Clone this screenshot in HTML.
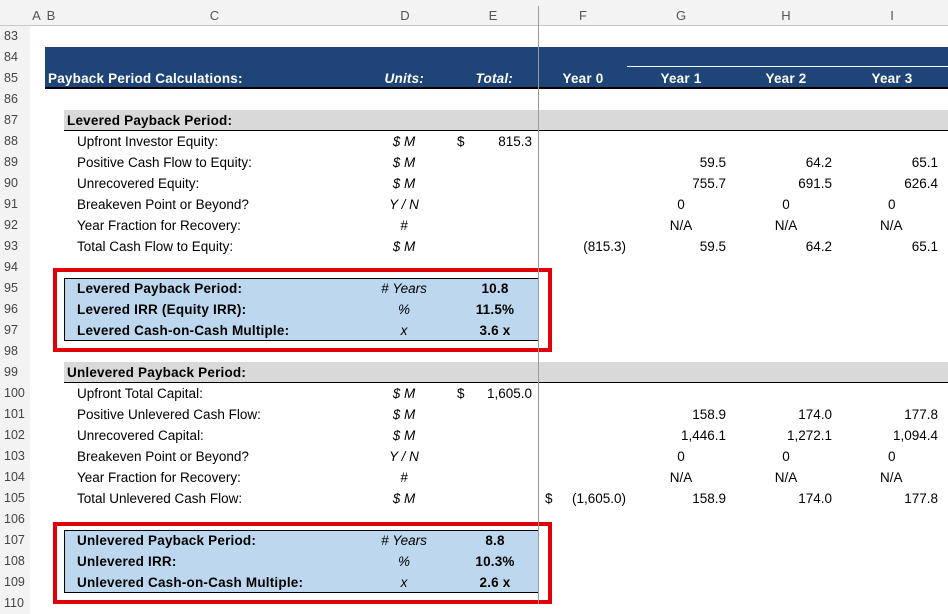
<!DOCTYPE html>
<html><head><meta charset="utf-8"><style>
*{margin:0;padding:0;box-sizing:border-box}
body{width:948px;height:604px;overflow:hidden;background:#fff;font-family:"Liberation Sans",Arial,sans-serif;font-size:13.5px;color:#000;position:relative}
div{position:absolute;white-space:nowrap}
.t{height:21px;line-height:21px}
.r{text-align:right}
.c{text-align:center}
.b{font-weight:bold;letter-spacing:0.2px}
.i{font-style:italic}
.rn{left:0;width:30px;padding-left:4px;color:#444;font-size:12.5px;background:#f3f3f3;height:21px;line-height:21px}
.hd{top:0;height:26px;line-height:32px;font-size:13px;color:#555;text-align:center}
</style></head><body>
<div style="left:0;top:0;width:948px;height:26px;background:#f3f3f3;border-bottom:1px solid #c8c8c8"></div>
<div style="left:0;top:26px;width:30px;height:578px;background:#f3f3f3;border-right:1px solid #d0d0d0"></div>
<div class="hd" style="left:30px;width:13px">A</div>
<div class="hd" style="left:43px;width:16px">B</div>
<div class="hd" style="left:59px;width:311px">C</div>
<div class="hd" style="left:370px;width:70px">D</div>
<div class="hd" style="left:448px;width:90px">E</div>
<div class="hd" style="left:538px;width:90px">F</div>
<div class="hd" style="left:630px;width:102px">G</div>
<div class="hd" style="left:735px;width:102px">H</div>
<div class="hd" style="left:840px;width:104px">I</div>

<div style="left:45px;top:47px;width:903px;height:42px;background:#1f4478;border-bottom:2px solid #000"></div>
<div style="left:627px;top:66px;width:321px;height:1px;background:#fff"></div>
<div class="t b" style="left:48px;top:68px;color:#fff">Payback Period Calculations:</div>
<div class="t b i" style="left:370px;top:68px;width:54px;text-align:right;color:#fff">Units:</div>
<div class="t b i" style="left:440px;top:68px;width:73px;text-align:right;color:#fff">Total:</div>
<div class="t b c" style="left:538px;top:68px;width:90px;color:#fff">Year 0</div>
<div class="t b c" style="left:630px;top:68px;width:102px;color:#fff">Year 1</div>
<div class="t b c" style="left:735px;top:68px;width:102px;color:#fff">Year 2</div>
<div class="t b c" style="left:840px;top:68px;width:104px;color:#fff">Year 3</div>

<div style="left:64px;top:110px;width:884px;height:21px;background:#d9d9d9;border-bottom:1px solid #000"></div>
<div class="t b" style="left:67px;top:110px">Levered Payback Period:</div>
<div style="left:64px;top:362px;width:884px;height:21px;background:#d9d9d9;border-bottom:1px solid #000"></div>
<div class="t b" style="left:67px;top:362px">Unlevered Payback Period:</div>

<div class="t" style="left:77px;top:131px">Upfront Investor Equity:</div>
<div class="t" style="left:77px;top:152px">Positive Cash Flow to Equity:</div>
<div class="t" style="left:77px;top:173px">Unrecovered Equity:</div>
<div class="t" style="left:77px;top:194px">Breakeven Point or Beyond?</div>
<div class="t" style="left:77px;top:215px">Year Fraction for Recovery:</div>
<div class="t" style="left:77px;top:236px">Total Cash Flow to Equity:</div>
<div class="t i c" style="left:370px;top:131px;width:68px">$ M</div>
<div class="t i c" style="left:370px;top:152px;width:68px">$ M</div>
<div class="t i c" style="left:370px;top:173px;width:68px">$ M</div>
<div class="t i c" style="left:370px;top:194px;width:68px">Y / N</div>
<div class="t i c" style="left:370px;top:215px;width:68px">#</div>
<div class="t i c" style="left:370px;top:236px;width:68px">$ M</div>
<div class="t" style="left:457px;top:131px">$</div>
<div class="t r" style="left:460px;top:131px;width:72px">815.3</div>
<div class="t r" style="left:538px;top:236px;width:88px">(815.3)</div>
<div class="t r" style="left:630px;top:152px;width:96px">59.5</div>
<div class="t r" style="left:630px;top:173px;width:96px">755.7</div>
<div class="t c" style="left:630px;top:194px;width:102px">0</div>
<div class="t c" style="left:630px;top:215px;width:102px">N/A</div>
<div class="t r" style="left:630px;top:236px;width:96px">59.5</div>
<div class="t r" style="left:735px;top:152px;width:97px">64.2</div>
<div class="t r" style="left:735px;top:173px;width:97px">691.5</div>
<div class="t c" style="left:735px;top:194px;width:102px">0</div>
<div class="t c" style="left:735px;top:215px;width:102px">N/A</div>
<div class="t r" style="left:735px;top:236px;width:97px">64.2</div>
<div class="t r" style="left:840px;top:152px;width:98px">65.1</div>
<div class="t r" style="left:840px;top:173px;width:98px">626.4</div>
<div class="t" style="left:888px;top:194px">0</div>
<div class="t" style="left:880px;top:215px">N/A</div>
<div class="t r" style="left:840px;top:236px;width:98px">65.1</div>

<div style="left:53px;top:268px;width:499px;height:84px;border:4px solid #e0000a"></div>
<div style="left:64px;top:278px;width:474px;height:63px;background:#bdd7ee;border:1px solid #000;border-right:none"></div>
<div class="t b" style="left:77px;top:278px">Levered Payback Period:</div>
<div class="t b" style="left:77px;top:299px">Levered IRR (Equity IRR):</div>
<div class="t b" style="left:77px;top:320px">Levered Cash-on-Cash Multiple:</div>
<div class="t i c" style="left:370px;top:278px;width:68px">#&nbsp;Years</div>
<div class="t i c" style="left:370px;top:299px;width:68px">%</div>
<div class="t i c" style="left:370px;top:320px;width:68px">x</div>
<div class="t b c" style="left:455px;top:278px;width:80px">10.8</div>
<div class="t b c" style="left:455px;top:299px;width:80px">11.5%</div>
<div class="t b c" style="left:455px;top:320px;width:80px">3.6 x</div>

<div class="t" style="left:77px;top:383px">Upfront Total Capital:</div>
<div class="t" style="left:77px;top:404px">Positive Unlevered Cash Flow:</div>
<div class="t" style="left:77px;top:425px">Unrecovered Capital:</div>
<div class="t" style="left:77px;top:446px">Breakeven Point or Beyond?</div>
<div class="t" style="left:77px;top:467px">Year Fraction for Recovery:</div>
<div class="t" style="left:77px;top:488px">Total Unlevered Cash Flow:</div>
<div class="t i c" style="left:370px;top:383px;width:68px">$ M</div>
<div class="t i c" style="left:370px;top:404px;width:68px">$ M</div>
<div class="t i c" style="left:370px;top:425px;width:68px">$ M</div>
<div class="t i c" style="left:370px;top:446px;width:68px">Y / N</div>
<div class="t i c" style="left:370px;top:467px;width:68px">#</div>
<div class="t i c" style="left:370px;top:488px;width:68px">$ M</div>
<div class="t" style="left:457px;top:383px">$</div>
<div class="t r" style="left:460px;top:383px;width:72px">1,605.0</div>
<div class="t" style="left:545px;top:488px">$</div>
<div class="t r" style="left:538px;top:488px;width:88px">(1,605.0)</div>
<div class="t r" style="left:630px;top:404px;width:96px">158.9</div>
<div class="t r" style="left:630px;top:425px;width:96px">1,446.1</div>
<div class="t c" style="left:630px;top:446px;width:102px">0</div>
<div class="t c" style="left:630px;top:467px;width:102px">N/A</div>
<div class="t r" style="left:630px;top:488px;width:96px">158.9</div>
<div class="t r" style="left:735px;top:404px;width:97px">174.0</div>
<div class="t r" style="left:735px;top:425px;width:97px">1,272.1</div>
<div class="t c" style="left:735px;top:446px;width:102px">0</div>
<div class="t c" style="left:735px;top:467px;width:102px">N/A</div>
<div class="t r" style="left:735px;top:488px;width:97px">174.0</div>
<div class="t r" style="left:840px;top:404px;width:98px">177.8</div>
<div class="t r" style="left:840px;top:425px;width:98px">1,094.4</div>
<div class="t" style="left:888px;top:446px">0</div>
<div class="t" style="left:880px;top:467px">N/A</div>
<div class="t r" style="left:840px;top:488px;width:98px">177.8</div>

<div style="left:53px;top:522px;width:499px;height:82px;border:4px solid #e0000a"></div>
<div style="left:64px;top:530px;width:474px;height:63px;background:#bdd7ee;border:1px solid #000;border-right:none"></div>
<div class="t b" style="left:77px;top:530px">Unlevered Payback Period:</div>
<div class="t b" style="left:77px;top:551px">Unlevered IRR:</div>
<div class="t b" style="left:77px;top:572px">Unlevered Cash-on-Cash Multiple:</div>
<div class="t i c" style="left:370px;top:530px;width:68px">#&nbsp;Years</div>
<div class="t i c" style="left:370px;top:551px;width:68px">%</div>
<div class="t i c" style="left:370px;top:572px;width:68px">x</div>
<div class="t b c" style="left:455px;top:530px;width:80px">8.8</div>
<div class="t b c" style="left:455px;top:551px;width:80px">10.3%</div>
<div class="t b c" style="left:455px;top:572px;width:80px">2.6 x</div>

<div style="left:538px;top:6px;width:1px;height:598px;background:#9a9a9a"></div>

<div class="rn" style="top:26px">83</div>
<div class="rn" style="top:47px">84</div>
<div class="rn" style="top:68px">85</div>
<div class="rn" style="top:89px">86</div>
<div class="rn" style="top:110px">87</div>
<div class="rn" style="top:131px">88</div>
<div class="rn" style="top:152px">89</div>
<div class="rn" style="top:173px">90</div>
<div class="rn" style="top:194px">91</div>
<div class="rn" style="top:215px">92</div>
<div class="rn" style="top:236px">93</div>
<div class="rn" style="top:257px">94</div>
<div class="rn" style="top:278px">95</div>
<div class="rn" style="top:299px">96</div>
<div class="rn" style="top:320px">97</div>
<div class="rn" style="top:341px">98</div>
<div class="rn" style="top:362px">99</div>
<div class="rn" style="top:383px">100</div>
<div class="rn" style="top:404px">101</div>
<div class="rn" style="top:425px">102</div>
<div class="rn" style="top:446px">103</div>
<div class="rn" style="top:467px">104</div>
<div class="rn" style="top:488px">105</div>
<div class="rn" style="top:509px">106</div>
<div class="rn" style="top:530px">107</div>
<div class="rn" style="top:551px">108</div>
<div class="rn" style="top:572px">109</div>
<div class="rn" style="top:593px">110</div>
</body></html>
